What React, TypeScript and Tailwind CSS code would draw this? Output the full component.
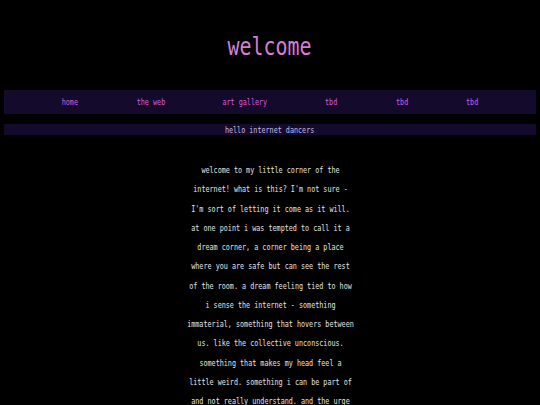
const links = ['home', 'the web', 'art gallery', 'tbd', 'tbd', 'tbd'];

const intro =
  "welcome to my little corner of the internet! what is this? I'm not sure - I'm sort of letting it come as it will. at one point i was tempted to call it a dream corner, a corner being a place where you are safe but can see the rest of the room. a dream feeling tied to how i sense the internet - something immaterial, something that hovers between us. like the collective unconscious. something that makes my head feel a little weird. something i can be part of and not really understand. and the urge to keep poking at it anyway, to see what happens.";

export default function App() {
  return (
    <div
      className="min-h-screen w-full bg-black pb-10"
      style={{ fontFamily: '"DejaVu Sans Mono", "Liberation Mono", monospace' }}
    >
      {/* header */}
      <div className="flex justify-center pt-[31px]">
        <h1 className="scale-x-[0.83] whitespace-nowrap text-[24px] leading-[32px] text-[#d47fd6]">welcome</h1>
      </div>

      {/* nav */}
      <nav className="mx-1 mt-[27px] flex h-[24px] items-center justify-evenly bg-[#140a2c]">
        {links.map((l, i) => (
          <a
            key={i}
            href="#"
            className="flex justify-center text-[9px] leading-[12px] text-[#d35ee0]"
            style={{ width: l.length * 4.06 }}
          >
            <span className="scale-x-[0.75] whitespace-nowrap">{l}</span>
          </a>
        ))}
      </nav>

      {/* banner */}
      <div className="mx-1 mt-[10px] flex h-[11px] items-center justify-center bg-[#140a2c] pt-px">
        <span className="scale-x-[0.75] whitespace-nowrap text-[9px] leading-[10px] text-[#c5bde6]">
          hello internet dancers
        </span>
      </div>

      {/* body */}
      <div className="mt-[26px] flex justify-center">
        <p className="w-[223px] scale-x-[0.75] text-center text-[9px] leading-[19.25px] text-[#e4e4e4]">{intro}</p>
      </div>
    </div>
  );
}
